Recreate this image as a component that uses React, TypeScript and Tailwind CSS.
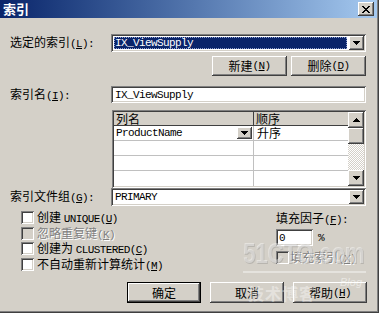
import type { ReactNode } from "react";

// Win2000 classic bevels, drawn as inset shadows so padding keeps content off them.
const RAISED =
  "shadow-[inset_-1px_-1px_0_#404040,inset_1px_1px_0_#ffffff,inset_-2px_-2px_0_#808080,inset_2px_2px_0_#d4d0c8]";
const SUNKEN =
  "shadow-[inset_1px_1px_0_#808080,inset_-1px_-1px_0_#ffffff,inset_2px_2px_0_#404040,inset_-2px_-2px_0_#d4d0c8]";
const DEFAULT_BTN =
  "shadow-[inset_0_0_0_1px_#000000,inset_-2px_-2px_0_#404040,inset_2px_2px_0_#ffffff,inset_-3px_-3px_0_#808080,inset_3px_3px_0_#d4d0c8]";
const DISABLED = "text-[#808080] [text-shadow:1px_1px_0_#ffffff]";

// Latin runs in the SimSun look: monospace, 6px per character.
function Mono({ children }: { children: ReactNode }) {
  return (
    <span className="font-['Liberation_Mono',monospace] text-[11px] tracking-[-0.6px]">
      {children}
    </span>
  );
}

function Key({ k, colon = false }: { k: string; colon?: boolean }) {
  return (
    <Mono>
      (<u>{k}</u>){colon ? ":" : ""}
    </Mono>
  );
}

function Tri({ up = false }: { up?: boolean }) {
  return (
    <svg
      width="7"
      height="4"
      viewBox="0 0 7 4"
      shapeRendering="crispEdges"
      className={up ? "rotate-180" : ""}
      aria-hidden
    >
      <path d="M0 0H7V1H6V2H5V3H4V4H3V3H2V2H1V1H0Z" fill="#000" />
    </svg>
  );
}

function Combo({ value, selected = false }: { value: string; selected?: boolean }) {
  return (
    <div className={`flex h-[18px] w-[255px] bg-white p-[2px] ${SUNKEN}`}>
      <div className="flex flex-1 p-[1px] pr-[2px]">
        <div
          className={
            selected
              ? "flex flex-1 items-center bg-[#0a246a] pl-[1px] text-white outline-1 outline-dotted -outline-offset-1 outline-[#8f9fcf]"
              : "flex flex-1 items-center pl-[1px] text-black"
          }
        >
          <Mono>{value}</Mono>
        </div>
      </div>
      <div className={`flex w-[15px] items-center justify-center bg-[#d4d0c8] ${RAISED}`}>
        <Tri />
      </div>
    </div>
  );
}

function Btn({ children, className = "" }: { children: ReactNode; className?: string }) {
  return (
    <div className={`flex items-center justify-center bg-[#d4d0c8] ${className}`}>{children}</div>
  );
}

function Check({ disabled = false }: { disabled?: boolean }) {
  return (
    <div
      className={`h-[13px] w-[13px] shrink-0 ${SUNKEN} ${disabled ? "bg-[#d4d0c8]" : "bg-white"}`}
    />
  );
}

function GridRow({ children, last = false }: { children?: ReactNode; last?: boolean }) {
  return (
    <div className={`flex h-[15px] ${last ? "" : "border-b border-[#c0c0c0]"}`}>{children}</div>
  );
}

export default function App() {
  return (
    <div className="relative h-[313px] w-[379px] overflow-hidden bg-[#d4d0c8] font-['Noto_Sans_CJK_SC',sans-serif] text-[12px] leading-[14px] text-black shadow-[inset_-1px_-1px_0_#404040,inset_-2px_-2px_0_#808080]">
      {/* title bar */}
      <div className="flex h-[18px] w-[377px] items-center justify-between bg-linear-to-r from-[#0a246a] to-[#a6caf0] pl-[3px] pr-[3px]">
        <span className="text-[13px] font-bold leading-[16px] text-white">索引</span>
        <div className={`flex h-[14px] w-[16px] items-center justify-center bg-[#d4d0c8] ${RAISED}`}>
          <svg width="8" height="7" viewBox="0 0 8 7" shapeRendering="crispEdges" aria-hidden>
            <path d="M0 0h2l2 2.3L6 0h2L5 3.5 8 7H6L4 4.7 2 7H0l3-3.5z" fill="#000" />
          </svg>
        </div>
      </div>

      <div className="pl-[10px]">
        {/* selected index */}
        <div className="mt-[16px] flex h-[18px] items-center">
          <span className="w-[101px]">
            选定的索引<Key k="L" colon />
          </span>
          <Combo value="IX_ViewSupply" selected />
        </div>

        <div className="mt-[4px] flex justify-end gap-[4px] pr-[13px]">
          <Btn className={`h-[20px] w-[75px] ${RAISED}`}>
            新建<Key k="N" />
          </Btn>
          <Btn className={`h-[20px] w-[75px] ${RAISED}`}>
            删除<Key k="D" />
          </Btn>
        </div>

        {/* index name */}
        <div className="mt-[10px] flex h-[17px] items-center">
          <span className="w-[101px]">
            索引名<Key k="I" colon />
          </span>
          <div className={`flex h-[17px] w-[255px] items-center bg-white pl-[4px] ${SUNKEN}`}>
            <Mono>IX_ViewSupply</Mono>
          </div>
        </div>

        {/* columns grid */}
        <div className={`ml-[102px] mt-[7px] flex h-[78px] w-[254px] bg-white p-[2px] ${SUNKEN}`}>
          <div className="flex flex-1 flex-col">
            <div className="flex h-[14px] border-b border-[#404040] bg-[#d4d0c8] leading-[13px]">
              <div className="w-[140px] border-r border-[#404040] pl-[2px]">列名</div>
              <div className="flex-1 pl-[2px]">顺序</div>
            </div>
            <GridRow>
              <div className="flex w-[140px] items-center justify-between border-r border-[#c0c0c0] pl-[2px] pr-[1px]">
                <Mono>ProductName</Mono>
                <div className={`flex h-[12px] w-[15px] items-center justify-center bg-[#d4d0c8] ${RAISED}`}>
                  <Tri />
                </div>
              </div>
              <div className="flex-1 pl-[3px]">升序</div>
            </GridRow>
            <GridRow>
              <div className="w-[140px] border-r border-[#c0c0c0]" />
            </GridRow>
            <GridRow>
              <div className="w-[140px] border-r border-[#c0c0c0]" />
            </GridRow>
            <GridRow last>
              <div className="w-[140px] border-r border-[#c0c0c0]" />
            </GridRow>
          </div>
          <div className="flex w-[16px] flex-col">
            <div className={`flex h-[16px] items-center justify-center bg-[#d4d0c8] ${RAISED}`}>
              <Tri up />
            </div>
            <div className={`h-[16px] bg-[#d4d0c8] ${RAISED}`} />
            <div className="flex-1 bg-[repeating-conic-gradient(#d4d0c8_0_25%,#ffffff_0_50%)] bg-[length:2px_2px]" />
            <div className={`flex h-[16px] items-center justify-center bg-[#d4d0c8] ${RAISED}`}>
              <Tri />
            </div>
          </div>
        </div>

        {/* filegroup */}
        <div className="flex h-[18px] items-center">
          <span className="w-[101px]">
            索引文件组<Key k="G" colon />
          </span>
          <Combo value="PRIMARY" />
        </div>

        <div className="flex h-[76px]">
          <div className="ml-[11px] flex w-[255px] flex-col pt-[5px]">
            <div className="flex h-[16px] gap-[3px]">
              <Check />
              <span className="-mt-[1px]">
                创建 <Mono>UNIQUE</Mono>
                <Key k="U" />
              </span>
            </div>
            <div className="flex h-[15px] gap-[3px]">
              <Check disabled />
              <span className={`-mt-[1px] ${DISABLED}`}>
                忽略重复键<Key k="K" />
              </span>
            </div>
            <div className="flex h-[16px] gap-[3px]">
              <Check />
              <span className="-mt-[1px]">
                创建为 <Mono>CLUSTERED</Mono>
                <Key k="C" />
              </span>
            </div>
            <div className="flex h-[15px] gap-[3px]">
              <Check />
              <span className="-mt-[1px]">
                不自动重新计算统计<Key k="M" />
              </span>
            </div>
          </div>

          <div className="flex flex-col pt-[5px]">
            <span>
              填充因子<Key k="F" colon />
            </span>
            <div className="mt-[2px] flex items-center gap-[5px]">
              <div className={`flex h-[17px] w-[37px] items-center bg-white pl-[3px] ${SUNKEN}`}>
                <Mono>0</Mono>
              </div>
              <Mono>%</Mono>
            </div>
            <div className="mt-[5px] flex h-[13px] items-center gap-[1px]">
              <Check disabled />
              <span className={DISABLED}>
                填充索引<Key k="X" />
              </span>
            </div>
          </div>
        </div>

        <div className="flex gap-[9px] pl-[117px]">
          <Btn className={`h-[21px] w-[74px] ${DEFAULT_BTN}`}>确定</Btn>
          <Btn className={`h-[21px] w-[74px] ${RAISED}`}>取消</Btn>
          <Btn className={`h-[21px] w-[74px] ${RAISED}`}>
            帮助<Key k="H" />
          </Btn>
        </div>
      </div>

      {/* 51CTO watermark laid over the dialog */}
      <div className="pointer-events-none absolute left-[243px] top-[238px] w-[136px] text-white/40">
        <div className="origin-left scale-x-75 whitespace-nowrap font-['Liberation_Sans',sans-serif] text-[30px] font-bold leading-[30px] tracking-[-0.5px] [text-shadow:1px_1px_0_rgba(120,120,120,0.3)]">
          51CTO.com
        </div>
        <div className="mt-[3px] h-[2px] w-[123px] bg-white/40" />
      </div>
      <div className="pointer-events-none absolute left-[248px] top-[283px] text-[16px] font-bold leading-[20px] tracking-[1px] text-white/40">
        技术博客
      </div>
      <div className="pointer-events-none absolute left-[340px] top-[276px] font-['Liberation_Sans',sans-serif] text-[11px] italic leading-[12px] text-white/50">
        Blog
      </div>
    </div>
  );
}
